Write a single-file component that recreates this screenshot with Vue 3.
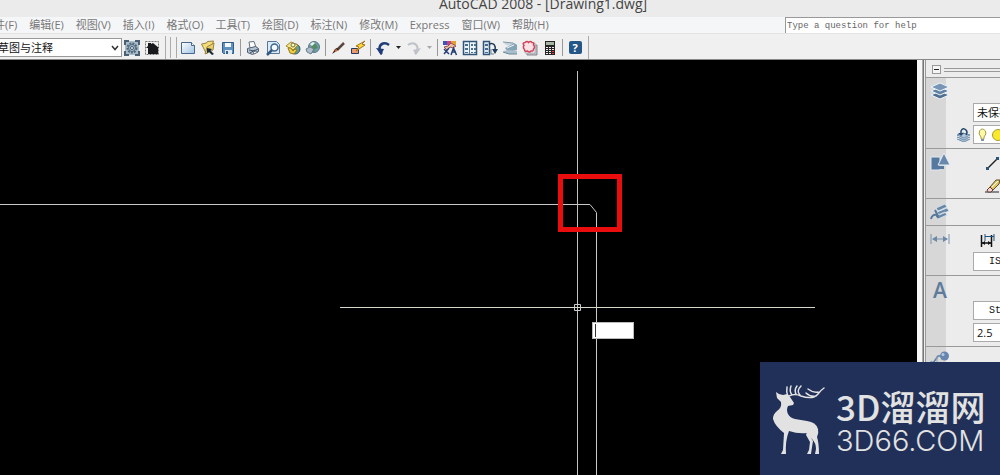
<script setup>
import { ref } from 'vue'

const menus = ['件(F)', '编辑(E)', '视图(V)', '插入(I)', '格式(O)', '工具(T)', '绘图(D)', '标注(N)', '修改(M)', 'Express', '窗口(W)', '帮助(H)']
const question = ref('')
const command = ref('')
const textHeight = ref('2.5')
</script>

<template>
  <div class="app">
    <header class="title">AutoCAD 2008 - [Drawing1.dwg]</header>

    <div class="menubar">
      <nav class="menus">
        <button v-for="m in menus" :key="m" type="button">{{ m }}</button>
      </nav>
      <input v-model="question" class="question" type="text" aria-label="Help search" placeholder="Type a question for help" />
    </div>

    <div class="toolbars">
      <div class="bar">
        <div class="workspace">
          <select aria-label="工作空间">
            <option>草图与注释</option>
          </select>
          <svg class="chevron" width="8" height="6" viewBox="0 0 8 6"><path d="M1 1l3 3.500 3-3.500" fill="none" stroke="#333" stroke-width="1.500" /></svg>
        </div>
        <button class="tool" type="button" aria-label="工作空间设置">
          <svg viewBox="0 0 16 16">
            <path d="M1 1h14v14H1z" fill="#a9bac8" />
            <path d="M1 5V1h4M11 1h4v4M15 11v4h-4M5 15H1v-4" fill="none" stroke="#4b6073" stroke-width="2" />
            <circle cx="8" cy="8" r="4.500" fill="#c8d5de" stroke="#4e667b" stroke-width="2" stroke-dasharray="2 1" />
            <circle cx="8" cy="8" r="3.500" fill="#a5bacb" stroke="#4e667b" />
            <circle cx="8" cy="8" r="1.500" fill="#f5f7f9" stroke="#3e566b" />
          </svg>
        </button>
        <button class="tool" type="button" aria-label="我的工作空间">
          <svg viewBox="0 0 16 16">
            <path d="M1.500 1.500h13v13h-13z" fill="none" stroke="#777" stroke-dasharray="2 1" />
            <path d="M2 8l2-2V3h3v1l2-1 6 5h-1v6H4V8z" fill="#17191c" />
          </svg>
        </button>
      </div>

      <div class="bar standard">
        <button class="tool" type="button" aria-label="新建">
          <svg viewBox="0 0 16 16">
            <defs><linearGradient id="paper" x2="1" y2="1"><stop offset="0" stop-color="#fff" /><stop offset="1" stop-color="#9fc3e2" /></linearGradient></defs>
            <path d="M1.500 2.500h10l3 3v8h-13z" fill="url(#paper)" stroke="#48698b" />
            <path d="M11.500 2.500v3h3" fill="#fff" stroke="#48698b" />
          </svg>
        </button>
        <button class="tool" type="button" aria-label="打开">
          <svg viewBox="0 0 16 16">
            <path d="M1.500 4l5-1 1-1.500 6-.5-2 6-5 7z" fill="#f3dc7a" stroke="#9a8341" />
            <path d="M5 14l2-7 7-4-1 7z" fill="#ead06b" stroke="#9a8341" />
            <path d="M7 8l5 1-1.500 1.500L14 14l-2 1-3-3-2 1z" fill="#192b3c" />
          </svg>
        </button>
        <button class="tool" type="button" aria-label="保存">
          <svg viewBox="0 0 16 16">
            <path d="M2.500 2.500h11v11h-10l-1-1z" fill="#5e91be" stroke="#325c85" />
            <path d="M5 3h6v4H5z" fill="#f3f9ff" /><path d="M5 10h7v4H5z" fill="#dceaf4" /><path d="M6 11h2v3H6z" fill="#355f87" />
          </svg>
        </button>
        <span class="sep"></span>
        <button class="tool" type="button" aria-label="打印">
          <svg viewBox="0 0 16 16">
            <path d="M5 8L4 2l5-.500 2 6" fill="#fff" stroke="#627080" />
            <path d="M2.500 8.500l8-2 3 2v3l-6 3-5-2z" fill="#b5c3d0" stroke="#4e6074" />
            <path d="M4 10l5 1 4-2M5 13l5-3" fill="none" stroke="#3f5367" /><path d="M8 12l3-1 2 1-4 2z" fill="#fff" stroke="#627080" />
          </svg>
        </button>
        <button class="tool" type="button" aria-label="打印预览">
          <svg viewBox="0 0 16 16">
            <path d="M2.500 1.500h9l3 3v9h-12z" fill="#dcebf7" stroke="#55789a" />
            <circle cx="9.500" cy="7.500" r="3.500" fill="#f2f9ff" stroke="#42688c" stroke-width="1.500" />
            <path d="M7 10l-5 5" stroke="#315b83" stroke-width="2.500" />
          </svg>
        </button>
        <button class="tool" type="button" aria-label="发布">
          <svg viewBox="0 0 16 16">
            <circle cx="10" cy="9" r="5" fill="#689c8b" stroke="#31566d" />
            <path d="M1 6l5-4 7 3-5 5z" fill="#f8e782" stroke="#a18a30" />
            <path d="M3 8l2 5 4 1 3-4-2-1-2 2-2-3z" fill="#f0cf42" stroke="#917822" /><circle cx="8" cy="5" r="2" fill="#fff7c2" stroke="#6b7254" />
          </svg>
        </button>
        <button class="tool" type="button" aria-label="三维 DWF">
          <svg viewBox="0 0 16 16">
            <circle cx="9" cy="7" r="5.500" fill="#729ead" stroke="#58788b" />
            <path d="M7 3l4 1 2 4-3 1-1 3-3-3z" fill="#528e60" />
            <path d="M1 9l4-2 4 2-3 5-4-2z" fill="#aebdca" stroke="#6b7e90" /><path d="M5 4l3-2 2 1-3 3z" fill="#e9f7ef" />
          </svg>
        </button>
        <span class="sep"></span>
        <button class="tool" type="button" aria-label="特性匹配">
          <svg viewBox="0 0 16 16"><path d="M14 3L7 10" stroke="#5b4740" stroke-width="2.500" /><path d="M9 9l-4 3-3 2 3-5 2-1z" fill="#40251c" /><path d="M7 10l-2 1" stroke="#d66a35" stroke-width="2" /></svg>
        </button>
        <button class="tool" type="button" aria-label="块编辑器">
          <svg viewBox="0 0 16 16">
            <path d="M1.500 8.500h7v5h-7z" fill="#eb9b70" stroke="#263a60" />
            <path d="M15 1L6 6l3 1-3 4 9-6-3-1z" fill="#ffd93c" stroke="#a27218" />
          </svg>
        </button>
        <span class="sep"></span>
        <button class="tool" type="button" aria-label="放弃">
          <svg viewBox="0 0 16 16"><path d="M7 14C3 10 4 5 8 3.500q3-1 6 1.500" fill="none" stroke="#213d78" stroke-width="2.500" /><path d="M1 8l8 1-3 6z" fill="#213d78" /></svg>
        </button>
        <button class="drop" type="button" aria-label="放弃列表"><svg width="5" height="3"><path d="M0 0h5L2.500 3z" fill="#222" /></svg></button>
        <button class="tool" type="button" aria-label="重做">
          <svg viewBox="0 0 16 16"><path d="M9 14c4-4 3-9-1-10.500q-3-1-6 1.500" fill="none" stroke="#bfc3c8" stroke-width="2" /><path d="M15 8l-8 2 3 5z" fill="#bfc3c8" /></svg>
        </button>
        <button class="drop" type="button" aria-label="重做列表"><svg width="5" height="3"><path d="M0 0h5L2.500 3z" fill="#aaa" /></svg></button>
        <span class="sep"></span>
        <button class="tool" type="button" aria-label="特性">
          <svg viewBox="0 0 16 16">
            <path d="M1 1h4v4H1z" fill="#3d55bb" /><path d="M5 1h4v4H5z" fill="#cc3e87" /><path d="M9 1h5v4H9z" fill="#e6a12e" />
            <path d="M2 7l4-1 3-3 5 3-3 2-3-1-3 3z" fill="#f4bea0" stroke="#87545b" />
            <path d="M2 9l5 5M7 8l-5 6M9 15l2.500-7 3 7M10 12h4" fill="none" stroke="#263f74" stroke-width="1.500" />
          </svg>
        </button>
        <button class="tool" type="button" aria-label="设计中心">
          <svg viewBox="0 0 16 16">
            <path d="M1.500 1.500h13v13h-13z" fill="#eef5fa" stroke="#315577" stroke-width="1.500" /><path d="M7.500 2v12" stroke="#557897" />
            <path d="M3 4h3v2H3zm0 4h3v2H3zm0 4h3v1H3zm6-8h2v2H9zm3 0h2v2h-2zM9 8h2v2H9zm3 0h2v2h-2zm-3 4h2v1H9zm3 0h2v1h-2z" fill="#49718f" />
          </svg>
        </button>
        <button class="tool" type="button" aria-label="工具选项板">
          <svg viewBox="0 0 16 16">
            <path d="M1.500 1.500h6v13h-6z" fill="#dce9f3" stroke="#315577" stroke-width="1.500" /><path d="M3 4h3v2H3zm0 4h3v2H3zm0 4h3v1H3z" fill="#466a89" />
            <path d="M7 4c5-2 7 2 6 6" fill="none" stroke="#213b5b" stroke-width="1.500" /><path d="M10 9h6l-3 5z" fill="#213b5b" /><path d="M9 9v5h3" fill="none" stroke="#6a8094" />
          </svg>
        </button>
        <button class="tool" type="button" aria-label="图纸集管理器">
          <svg viewBox="0 0 16 16">
            <path d="M1 2l10 1 4 1v3L4 5z" fill="#c5d5de" /><path d="M1 2l10 1 3 2" fill="none" stroke="#8297a5" />
            <path d="M3 8l8-4 4 1v5l-9 2z" fill="#84a3b6" /><path d="M1 11l6-1 8 1v3H5z" fill="#a9bfcc" />
            <path d="M1 12l6 2h8" fill="none" stroke="#6d8899" /><path d="M5 8l7-3" stroke="#eef4f8" />
          </svg>
        </button>
        <button class="tool" type="button" aria-label="标记集管理器">
          <svg viewBox="0 0 16 16">
            <path d="M5 5h10v10H5z" fill="#c2bfc6" stroke="#858995" /><path d="M3 3h10v10H3z" fill="#f5f1f2" stroke="#b4b1b8" />
            <path d="M3 2.500q2-2 3.500 0 2-2 3.500 0 2.500 0 1.500 2.500 2 2 0 4 0 2.500-2.500 2-1.500 2-3.500 0-3 1-3-1.500-2-2-.5-4Q0 3 3 2.500z" fill="#fae1e5" stroke="#d0465d" stroke-width="1.500" />
          </svg>
        </button>
        <button class="tool" type="button" aria-label="快速计算器">
          <svg viewBox="0 0 16 16"><path d="M3 1h10v14H3z" fill="#252525" /><path d="M4 2h8v3H4z" fill="#a5b7a4" /><path d="M4 7h2v1H4zm3 0h2v1H7zm3 0h2v1h-2zM4 9h2v1H4zm3 0h2v1H7zm3 0h2v1h-2zm-6 2h2v1H4zm3 0h2v1H7zm-3 2h2v1H4zm3 0h2v1H7z" fill="#eee" /><path d="M10 11h2v1h-2zm0 2h2v1h-2z" fill="#e33" /></svg>
        </button>
        <span class="sep"></span>
        <button class="tool help" type="button" aria-label="帮助"><span>?</span></button>
      </div>
    </div>

    <main class="work">
      <section class="canvas" aria-label="绘图区">
        <svg class="drawing">
          <path d="M0 144.500h590l6.500 8V900" fill="none" stroke="#c9c9c9" />
          <path d="M577.500 11V900" stroke="#c4c4c4" />
          <path d="M340 247.500h475" stroke="#d8d8c9" />
          <path d="M574.500 244.500h6v6h-6z" fill="none" stroke="#ccc" />
          <path d="M560.500 116.500h59v53h-59z" fill="none" stroke="#ea0d0d" stroke-width="5" />
        </svg>
        <input v-model="command" class="dynamic" type="text" aria-label="动态输入" />
        <span class="caret"></span>
      </section>

      <aside class="dashboard">
        <div class="panel-head">
          <button type="button" aria-label="折叠"></button>
          <span class="grip"></span>
        </div>
        <section class="panel tall">
          <div class="tab"><svg viewBox="0 0 20 20"><path d="M1 14l9-4 9 4-9 4z" fill="#526f92" stroke="#eef5fb" /><path d="M1 10l9-4 9 4-9 4z" fill="#6482a4" stroke="#eef5fb" /><path d="M1 6l9-4 9 4-9 4z" fill="#7895b5" stroke="#eef5fb" /></svg></div>
          <div class="body">
            <div class="row"><button class="combo" type="button">未保存的图层状态</button></div>
            <div class="row">
              <svg class="lead" viewBox="0 0 15 15"><path d="M1 8l6-2 7 2-6 3zM1 10l7 3 6-3M1 12l7 3 6-3" fill="#b4c6d7" stroke="#6d8cab" /><path d="M5 7V4q2-4 5-1 2 2 0 5" fill="none" stroke="#24486d" stroke-width="1.500" /><path d="M2 6h6L5 9z" fill="#24486d" /></svg>
              <button class="combo lamps" type="button" aria-label="图层">
                <svg width="26" height="14" viewBox="0 0 26 14"><path d="M3 9Q0 6 1.500 3 4-1 7.500 3 9 6 6 9v2H3z" fill="#fff8a5" stroke="#a69b50" /><path d="M3 11h3v2H3z" fill="#8294a3" /><circle cx="20" cy="7" r="5.500" fill="#fae82f" stroke="#a79f32" /></svg>
              </button>
            </div>
          </div>
        </section>
        <section class="panel medium">
          <div class="tab"><svg viewBox="0 0 20 20"><path d="M1 5h9v13H1z" fill="#55789e" stroke="#dfe9f2" /><path d="M14 1l6 12H8z" fill="#6888ac" stroke="#e5eef6" /><path d="M2 14h12v3H2z" fill="#55789e" /></svg></div>
          <div class="body pens">
            <svg viewBox="0 0 16 16"><path d="M3 13L14 2" stroke="#222" stroke-width="1.500" /><path d="M2 11h3v3H2zM12 1h3v3h-3z" fill="#295677" /></svg>
            <svg viewBox="0 0 16 16"><path d="M1 14h14" stroke="#222" /><path d="M6 9l6-7h4l-1 4-6 6z" fill="#e5c65c" stroke="#594a32" /><path d="M3 12l3-3 3 3-2 2H4z" fill="#f6d5cf" stroke="#603c37" /><path d="M8 9l6-6" stroke="#fff" /></svg>
          </div>
        </section>
        <section class="panel short">
          <div class="tab"><svg viewBox="0 0 20 20"><path d="M6 6l9-4 2 3-9 4zM7 10l10-4 2 3-10 4zM5 14l10-4 2 3-9 4z" fill="#6988a7" stroke="#dce7ef" stroke-width=".8" /><path d="M1 17q1-5 6-4l1 3" fill="none" stroke="#577899" stroke-width="2" /><path d="M5 8l3 6" stroke="#577899" stroke-width="2" /></svg></div>
        </section>
        <section class="panel medium">
          <div class="tab"><svg viewBox="0 0 20 20"><path d="M1 5v10M19 5v10M3 10h14" stroke="#7891ab" /><path d="M2 10l5-3v6zM18 10l-5-3v6z" fill="#6c88a6" /></svg></div>
          <div class="body">
            <svg class="dim" viewBox="0 0 16 16"><path d="M2.500 2v12M12.500 2v12" stroke="#111" stroke-width="1.500" /><path d="M6 1v7M15 1v7M6 3.500h9" fill="none" stroke="#24547d" /><path d="M3 10h9" stroke="#111" stroke-width="1.500" /><path d="M3 10l3-2v4zM12 10l-3-2v4z" fill="#111" /></svg>
            <div class="row"><button class="combo mono" type="button">ISO-25</button></div>
          </div>
        </section>
        <section class="panel tall">
          <div class="tab"><span class="letter">A</span></div>
          <div class="body">
            <div class="row"><button class="combo mono" type="button">Standard</button></div>
            <div class="row"><input v-model="textHeight" class="combo" type="text" aria-label="文字高度" /></div>
          </div>
        </section>
        <section class="panel short">
          <div class="tab"><svg viewBox="0 0 20 20"><path d="M1 16L8 6h6" fill="none" stroke="#607e9e" stroke-width="1.500" /><path d="M0 18l1-7 5 3zM7 6v12" fill="#607e9e" stroke="#8ba2ba" /><circle cx="14.500" cy="6" r="4.500" fill="#6787b0" /><circle cx="13" cy="4.500" r="1.500" fill="#b5c9df" /></svg></div>
        </section>
      </aside>

      <div class="brand">
        <svg class="deer" viewBox="0 0 54 72">
          <path d="M2 9q3 3 7 3l4-1 3 3 4 6-1 2-5 1q-2 4 0 8 2 4 7 5l12 2q9 1 11 8 1 4-1 8 2 6 2 17h-4l1-5q0-6-4-10-5-3-5-6-9 1-18-2-4 10-3 23H7l2-4 1-17Q1 43-1 36q0-5 4-8 5-3 4-9l-4-4z" fill="#e1e2e1" />
          <path d="M33 49l6 9-1 6-1 7h-4l2-4 1-8-4-7z" fill="#e1e2e1" />
          <path d="M14 13q-2-4-1-9M15 13q6-3 12 0 12 4 17-2 3-4 6-6M18 12q-3-4-1-9M22 11q-2-4 1-8M26 12q-4-4 1-9M32 10q4 4 10 3M34 6q5 4 10 3" fill="none" stroke="#e1e2e1" stroke-width="1.500" stroke-linecap="round" />
        </svg>
        <div class="words">
          <strong>3D溜溜网</strong>
          <span>3D66.COM</span>
        </div>
      </div>
    </main>
  </div>
</template>

<style>
body { margin: 0; overflow: hidden; }
</style>

<style scoped>
.app {
  display: flex;
  flex-direction: column;
  height: 100vh;
  overflow: hidden;
  background: #efefef;
  font-family: "Open Sans", "Noto Sans CJK SC", sans-serif;
  font-size: 11px;
  color: #111;
}
* { box-sizing: border-box; }
button, input, select { margin: 0; padding: 0; border: 0; border-radius: 0; background: none; font: inherit; color: inherit; outline: none; }
.title {
  display: flex;
  align-items: flex-end;
  justify-content: center;
  height: 17px;
  padding: 0 0 3px 86px;
  background: #ebebeb;
  color: #444;
  font-size: 14px;
  line-height: 20px;
  white-space: nowrap;
}
.menubar { display: flex; height: 16px; background: #f5f6f7; }
.menus { display: flex; flex: 1; gap: 12px; margin-left: -6px; }
.menus button { color: #777; line-height: 16px; white-space: nowrap; }
.question {
  flex: 0 1 215px;
  min-width: 0;
  padding-left: 1px;
  border-top: 1px solid #999;
  border-left: 1px solid #999;
  background: #fff;
  font-family: "Liberation Mono", monospace;
  font-size: 9px;
}
.question::placeholder { color: #666; opacity: 1; }
.toolbars { display: flex; height: 27px; padding-top: 2px; border-top: 1px solid #e3e3e3; border-bottom: 1px solid #888; background: #f0f0f0; }
.bar { display: flex; align-items: center; padding-right: 3px; border-right: 1px solid #aaa; height: 23px; }
.workspace { position: relative; width: 122px; height: 19px; }
.workspace select { appearance: none; width: 100%; height: 100%; border: 1px solid #999; border-left: 0; background: #fff; text-indent: -2px; }
.chevron { position: absolute; right: 3px; top: 7px; }
.standard { margin-left: 2px; padding-left: 10px; position: relative; }
.standard::before { content: ""; position: absolute; left: 2px; top: 1px; bottom: 1px; width: 5px; border-left: 1px solid #aaa; border-right: 1px solid #aaa; }
.tool { display: flex; flex: none; align-items: center; justify-content: center; width: 20px; height: 20px; }
.tool svg { width: 16px; height: 16px; }
.drop { display: flex; align-items: center; justify-content: center; width: 11px; height: 20px; }
.sep { width: 5px; height: 17px; background: linear-gradient(90deg, transparent 2px, #999 2px, #999 3px, transparent 3px); }
.help span { width: 13px; height: 13px; border-radius: 2px; background: #245787; color: #fff; font-weight: 700; line-height: 13px; text-align: center; }
.work { position: relative; display: flex; flex: 1; min-height: 0; background: #000; }
.canvas { position: relative; flex: 1; min-width: 0; overflow: hidden; }
.drawing { position: absolute; inset: 0; width: 100%; height: 100%; }
.dynamic { position: absolute; left: 592px; top: 262px; width: 42px; height: 17px; border: 1px solid #bbb; background: #fff; }
.caret { position: absolute; left: 595px; top: 264px; width: 1px; height: 13px; background: #333; }
.dashboard { flex: none; width: 83px; overflow: hidden; border-left: 5px solid #f7f7f7; background: #ececec; box-shadow: inset 1px 0 #aaa, inset 2px 0 #777, inset 3px 0 #eee, inset 4px 0 #999; padding-left: 4px; }
.panel-head { display: flex; align-items: center; gap: 3px; height: 17px; padding: 2px 0 0 6px; }
.panel-head button { width: 9px; height: 9px; border: 1px solid #999; background: linear-gradient(#222, #222) center / 5px 1px no-repeat #f5f5f5; }
.grip { flex: 1; height: 4px; border-top: 1px solid #999; border-bottom: 1px solid #999; }
.panel { display: flex; border-top: 1px solid #999; }
.tall { height: 71px; }
.medium { height: 50px; }
.short { height: 27px; }
.tab { flex: none; width: 20px; padding: 3px 0 0 4px; background: #d7d7d7; }
.tab svg { display: block; width: 20px; height: 20px; overflow: visible; }
.letter { display: block; width: 20px; color: #5d7b9b; font: 600 21px/23px "Open Sans", sans-serif; text-align: center; }
.body { display: flex; flex: 1; flex-direction: column; justify-content: flex-end; gap: 3px; min-width: 0; padding-bottom: 4px; }
.row { display: flex; align-items: center; justify-content: flex-end; height: 19px; }
.combo { flex: none; width: 27px; height: 19px; padding-left: 3px; border: 1px solid #aaa; border-right: 0; background: #fff; overflow: hidden; text-align: left; white-space: nowrap; line-height: 17px; }
.mono { padding-left: 15px; font-family: "Liberation Mono", monospace; font-size: 10px; }
.lamps { padding-left: 4px; }
.lamps svg { display: block; }
.lead { width: 15px; height: 15px; margin-right: 2px; }
.pens { align-items: flex-end; gap: 6px; }
.pens svg { width: 16px; height: 16px; }
.dim { width: 16px; height: 16px; margin-left: 33px; }
.brand {
  position: absolute;
  right: 0;
  bottom: 0;
  display: flex;
  align-items: center;
  gap: 8px;
  width: 240px;
  height: 113px;
  padding-left: 14px;
  background: #213059;
  color: #e1e2e1;
}
.deer { flex: none; width: 54px; height: 72px; overflow: visible; }
.words { display: flex; flex-direction: column; padding-top: 4px; white-space: nowrap; }
.words strong { font: 500 35px/40px "Noto Sans CJK SC", sans-serif; }
.words span { font: 300 29px/29px Inter, sans-serif; }
</style>
